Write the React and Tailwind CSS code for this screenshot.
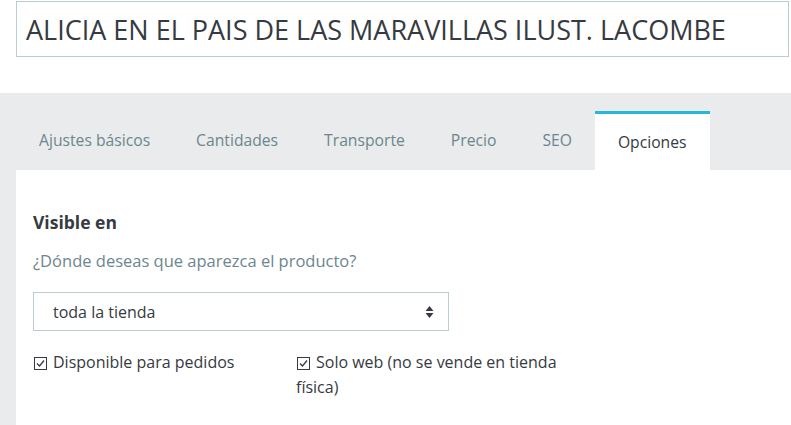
const tabs = ["Ajustes básicos", "Cantidades", "Transporte", "Precio", "SEO", "Opciones"];

const CheckBox = () => (
  <span className="inline-flex items-center justify-center w-[13px] h-[13px] border border-[#363a41] bg-white align-[-1px] ml-px mr-[6px]">
    <svg width="11" height="11" viewBox="0 0 11 11">
      <path d="M2 5.5 L4.5 8 L9 2.5" fill="none" stroke="#363a41" strokeWidth="1.3" />
    </svg>
  </span>
);

export default function App() {
  return (
    <div className="w-[791px] h-[425px] overflow-hidden bg-white text-[#363a41] font-['Open_Sans',sans-serif]">
      <div className="pt-px pl-4 pr-[2px]">
        <div className="h-[56px] border border-[#bbcdd2] flex items-center pl-[9px] text-[27px] leading-none text-[#363a41]">
          ALICIA EN EL PAIS DE LAS MARAVILLAS ILUST. LACOMBE
        </div>
      </div>

      <div className="mt-[36px] bg-[#eaebec] pl-4 pt-[18px] h-[332px]">
        <div className="flex h-[59px] items-end">
          {tabs.map((t) => {
            const active = t === "Opciones";
            return (
              <div
                key={t}
                className={
                  active
                    ? "h-[59px] px-[23px] pt-[2px] flex items-center bg-white border-t-[3px] border-[#25b9d7] text-[15.7px] text-[#363a41]"
                    : "h-[59px] px-[23px] pt-[1px] flex items-center text-[15.7px] text-[#6c868e]"
                }
              >
                {t}
              </div>
            );
          })}
        </div>

        <div className="bg-white h-full pl-[17px] pt-[40px]">
          <h3 className="text-[17.5px] font-bold leading-6 text-[#363a41]">Visible en</h3>
          <p className="mt-[17px] text-[16.5px] leading-5 text-[#6c868e]">¿Dónde deseas que aparezca el producto?</p>

          <div className="mt-[21px] w-[416px] h-[39px] border border-[#bbcdd2] flex items-center justify-between pl-[19px] pr-[14px] text-[16px] text-[#363a41]">
            <span>toda la tienda</span>
            <svg width="9" height="14" viewBox="0 0 9 14">
              <path d="M4.5 1 L8.5 6 L0.5 6 Z" fill="#363a41" />
              <path d="M4.5 13 L8.5 8 L0.5 8 Z" fill="#363a41" />
            </svg>
          </div>

          <div className="flex mt-[19px] text-[16px] leading-[25px]">
            <label className="block w-[263px]">
              <CheckBox />
              Disponible para pedidos
            </label>
            <label className="block w-[264px]">
              <CheckBox />
              Solo web (no se vende en tienda física)
            </label>
          </div>
        </div>
      </div>
    </div>
  );
}
